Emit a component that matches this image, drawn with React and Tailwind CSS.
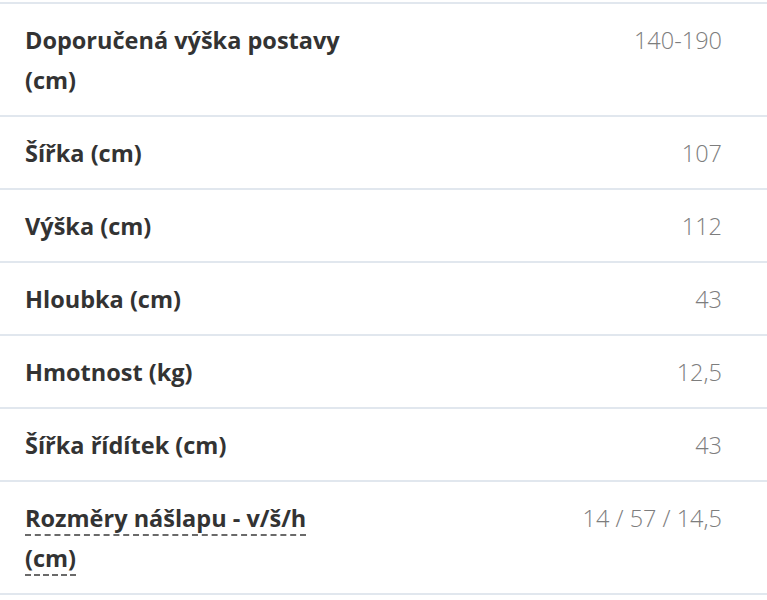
const rows = [
  { label: 'Doporučená výška postavy (cm)', value: '140-190' },
  { label: 'Šířka (cm)', value: '107' },
  { label: 'Výška (cm)', value: '112' },
  { label: 'Hloubka (cm)', value: '43' },
  { label: 'Hmotnost (kg)', value: '12,5' },
  { label: 'Šířka řídítek (cm)', value: '43' },
  { label: 'Rozměry nášlapu - v/š/h (cm)', value: '14 / 57 / 14,5', hint: true },
];

export default function App() {
  return (
    <div className="min-h-[600px] bg-white pt-[2px] font-['Open_Sans',sans-serif]">
      <table className="w-full border-collapse">
        <tbody>
          {rows.map((row) => (
            <tr key={row.label} className="border-y-2 border-[#e1e7ee]">
              <td className="w-[50%] pt-[16px] pb-[15px] pl-[25px] pr-4 align-top text-[23.5px] font-bold leading-[40px] text-[#333]">
                <div className="max-w-[330px]">
                  {row.hint ? (
                    <span className="border-b-2 border-dashed border-[#6a6a6a]">
                      {row.label}
                    </span>
                  ) : (
                    row.label
                  )}
                </div>
              </td>
              <td className="pt-[16px] pb-[15px] pr-[45px] text-right align-top text-[23.5px] font-light leading-[40px] text-[#7d7d7d]">
                {row.value}
              </td>
            </tr>
          ))}
        </tbody>
      </table>
    </div>
  );
}
